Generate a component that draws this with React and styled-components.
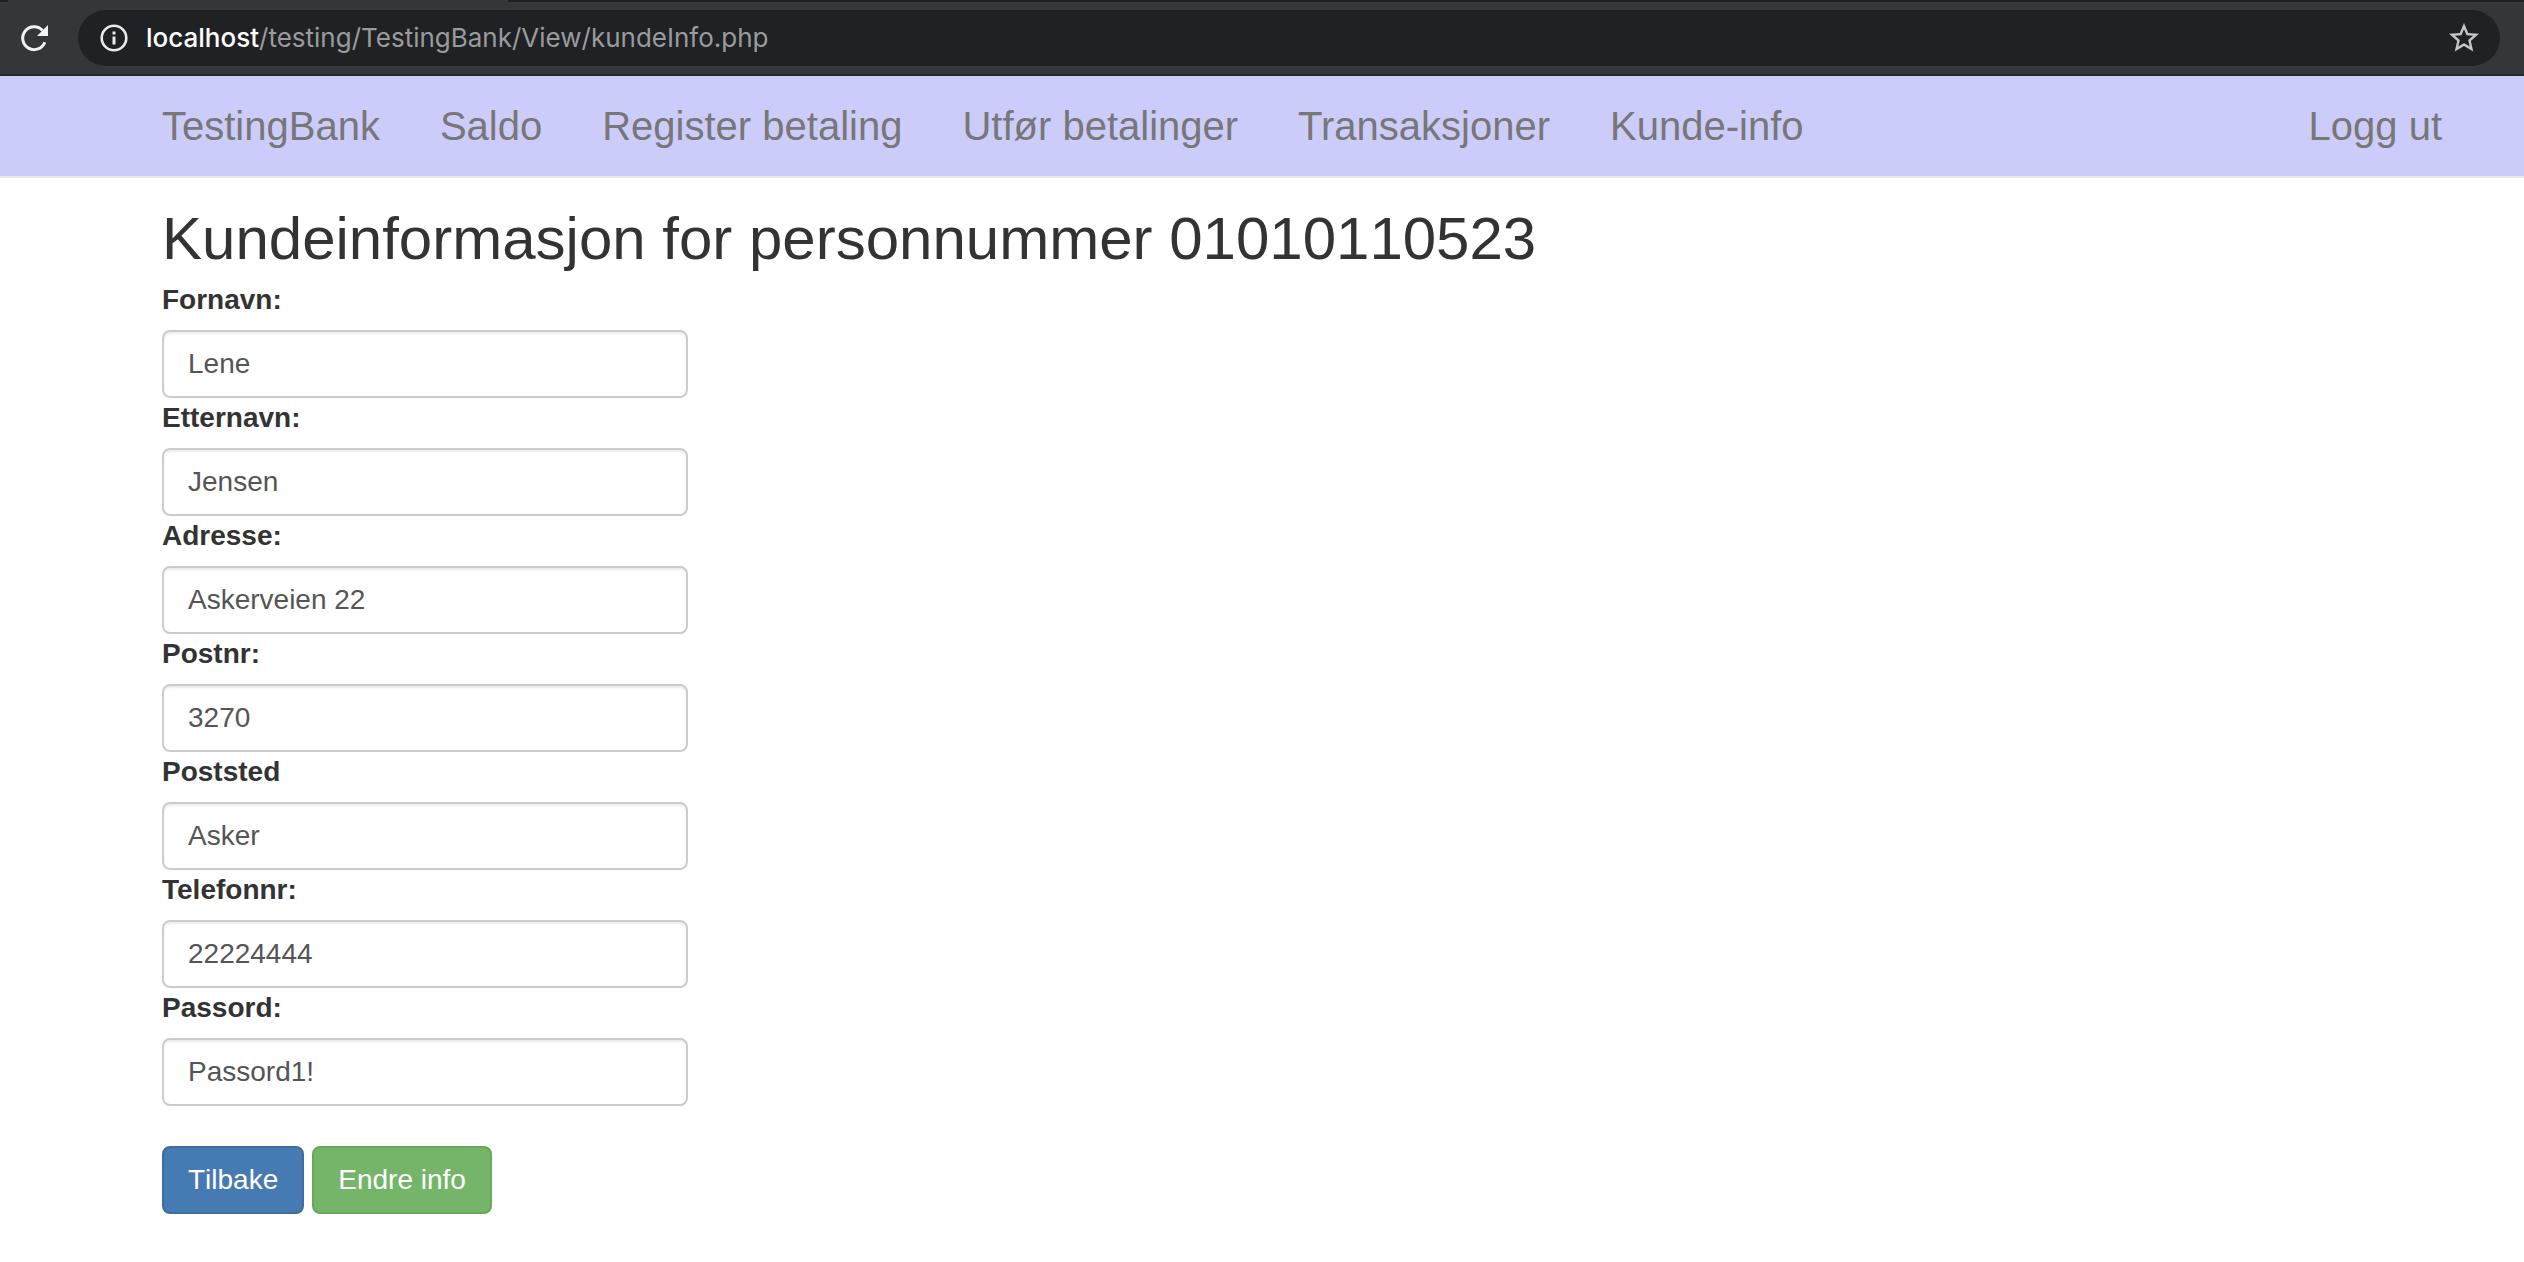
import React from 'react';
import styled, { createGlobalStyle } from 'styled-components';

const GlobalStyle = createGlobalStyle`
  *, *::before, *::after { box-sizing: border-box; }
  body {
    margin: 0;
    background: #fff;
    color: #333;
    font-family: "Helvetica Neue", "Liberation Sans", Arial, sans-serif;
    font-size: 28px;
    line-height: 40px;
  }
  button, input { font: inherit; }
`;

const TabStrip = styled.div`
  display: flex;
  height: 2px;
  background: #202124;
`;

const ActiveTab = styled.div`
  width: 500px;
  margin-left: 8px;
  background: #35363a;
`;

const BrowserBar = styled.div`
  display: flex;
  align-items: center;
  gap: 28px;
  padding: 8px 24px 8px 20px;
  background: #35363a;
  border-bottom: 2px solid #28292c;
`;

const IconButton = styled.button`
  display: flex;
  flex: none;
  padding: 0;
  border: 0;
  background: none;
  color: ${(p) => p.$color};
`;

const AddressBox = styled.div`
  display: flex;
  flex: 1;
  align-items: center;
  gap: 18px;
  height: 56px;
  padding: 0 18px 0 20px;
  border-radius: 28px;
  background: #202124;
`;

const Address = styled.div`
  flex: 1;
  color: #9a9b9d;
  font-family: Inter, sans-serif;
  font-size: 26px;
`;

const Host = styled.span`
  color: #fff;
  font-weight: 500;
`;

const Navbar = styled.nav`
  display: flex;
  align-items: center;
  justify-content: space-between;
  height: 102px;
  padding: 0 82px 0 162px;
  background: #ccccfb;
  border-bottom: 2px solid #e7e7e7;
`;

const NavList = styled.div`
  display: flex;
  gap: 60px;
`;

const NavLink = styled.a`
  color: #777;
  font-size: 40px;
  text-decoration: none;
`;

const Page = styled.main`
  padding: 28px 162px 0;
`;

const Title = styled.h2`
  margin: 0 0 8px;
  font-size: 60px;
  font-weight: 500;
  font-kerning: none;
  line-height: 66px;
`;

const Form = styled.form`
  width: 100%;
  max-width: 526px;
`;

const Label = styled.label`
  display: block;
  margin-bottom: 10px;
  font-weight: 700;
`;

const TextInput = styled.input`
  display: block;
  width: 100%;
  height: 68px;
  padding: 12px 24px;
  border: 2px solid #ccc;
  border-radius: 8px;
  background: #fff;
  color: #555;
  box-shadow: inset 0 2px 2px rgba(0, 0, 0, 0.075);
`;

const Actions = styled.div`
  display: flex;
  gap: 8px;
  margin-top: 40px;
`;

const Button = styled.button`
  height: 68px;
  padding: 12px 24px;
  border: 2px solid ${(p) => p.$border};
  border-radius: 8px;
  background: ${(p) => p.$fill};
  color: #fff;
  font-kerning: none;
  white-space: nowrap;
`;

const ReloadIcon = () => (
  <svg width="30" height="30" viewBox="0 0 30 30" fill="none" aria-hidden="true">
    <path d="M24.8 19.2A11.4 11.4 0 1 1 22.6 7.6" stroke="currentColor" strokeWidth="3" />
    <path d="M28 2v11H17z" fill="currentColor" />
  </svg>
);

const InfoIcon = () => (
  <svg width="30" height="30" viewBox="0 0 30 30" fill="none" aria-hidden="true">
    <circle cx="16" cy="15" r="12.3" stroke="#e8eaed" strokeWidth="2.6" />
    <path d="M14.5 8.5h3v3h-3zM14.5 13.5h3v8h-3z" fill="#e8eaed" />
  </svg>
);

const StarIcon = () => (
  <svg width="36" height="36" viewBox="0 0 24 24" fill="currentColor" aria-hidden="true">
    <path d="M22 9.24l-7.19-.62L12 2 9.19 8.63 2 9.24l5.46 4.73L5.82 21 12 17.27 18.18 21l-1.63-7.03L22 9.24zM12 15.4l-3.76 2.27 1-4.28-3.32-2.88 4.38-.38L12 6.1l1.71 4.04 4.38.38-3.32 2.88 1 4.28L12 15.4z" />
  </svg>
);

const links = ['TestingBank', 'Saldo', 'Register betaling', 'Utfør betalinger', 'Transaksjoner', 'Kunde-info'];

const fields = [
  { id: 'fornavn', label: 'Fornavn:', value: 'Lene' },
  { id: 'etternavn', label: 'Etternavn:', value: 'Jensen' },
  { id: 'adresse', label: 'Adresse:', value: 'Askerveien 22' },
  { id: 'postnr', label: 'Postnr:', value: '3270' },
  { id: 'poststed', label: 'Poststed', value: 'Asker' },
  { id: 'telefonnr', label: 'Telefonnr:', value: '22224444' },
  { id: 'passord', label: 'Passord:', value: 'Passord1!' },
];

export default function App() {
  return (
    <>
      <GlobalStyle />
      <header>
        <TabStrip><ActiveTab /></TabStrip>
        <BrowserBar>
          <IconButton type="button" $color="#f1f3f4"><ReloadIcon /></IconButton>
          <AddressBox>
            <InfoIcon />
            <Address><Host>localhost</Host>/testing/TestingBank/View/kundeInfo.php</Address>
            <IconButton type="button" $color="#c4c5c7"><StarIcon /></IconButton>
          </AddressBox>
        </BrowserBar>
      </header>
      <Navbar>
        <NavList>
          {links.map((text) => <NavLink key={text} href="#">{text}</NavLink>)}
        </NavList>
        <NavLink href="#">Logg ut</NavLink>
      </Navbar>
      <Page>
        <Title>Kundeinformasjon for personnummer 01010110523</Title>
        <Form onSubmit={(e) => e.preventDefault()}>
          {fields.map((f) => (
            <div key={f.id}>
              <Label htmlFor={f.id}>{f.label}</Label>
              <TextInput id={f.id} type="text" defaultValue={f.value} />
            </div>
          ))}
          <Actions>
            <Button type="button" $fill="#467ab3" $border="#3f6da1">Tilbake</Button>
            <Button type="submit" $fill="#75b569" $border="#67a958">Endre info</Button>
          </Actions>
        </Form>
      </Page>
    </>
  );
}
